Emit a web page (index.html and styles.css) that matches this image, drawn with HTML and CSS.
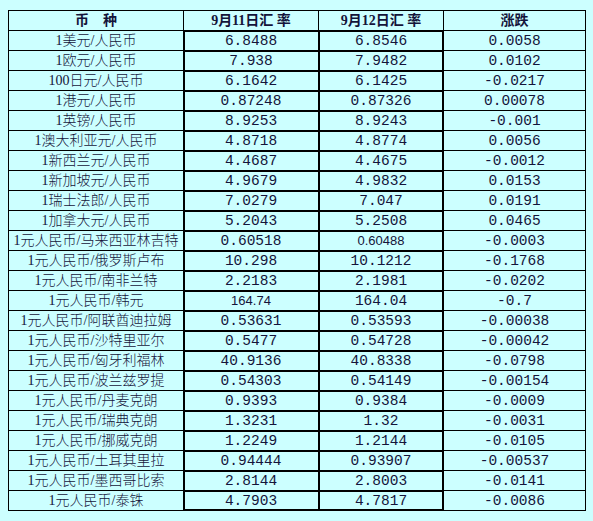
FILE: index.html
```html
<!DOCTYPE html>
<html lang="zh-CN">
<head>
<meta charset="utf-8">
<title>汇率</title>
<link rel="stylesheet" href="styles.css">
</head>
<body>
<div class="rates">
<div class="h">币　种</div><div class="h">9月11日汇 率</div><div class="h">9月12日汇 率</div><div class="h">涨跌</div>
<div class="name">1美元/人民币</div><div class="num a">6.8488</div><div class="num b">6.8546</div><div class="chg">0.0058</div>
<div class="name">1欧元/人民币</div><div class="num a">7.938</div><div class="num b">7.9482</div><div class="chg">0.0102</div>
<div class="name">100日元/人民币</div><div class="num a">6.1642</div><div class="num b">6.1425</div><div class="chg">-0.0217</div>
<div class="name">1港元/人民币</div><div class="num a">0.87248</div><div class="num b">0.87326</div><div class="chg">0.00078</div>
<div class="name">1英镑/人民币</div><div class="num a">8.9253</div><div class="num b">8.9243</div><div class="chg">-0.001</div>
<div class="name">1澳大利亚元/人民币</div><div class="num a">4.8718</div><div class="num b">4.8774</div><div class="chg">0.0056</div>
<div class="name">1新西兰元/人民币</div><div class="num a">4.4687</div><div class="num b">4.4675</div><div class="chg">-0.0012</div>
<div class="name">1新加坡元/人民币</div><div class="num a">4.9679</div><div class="num b">4.9832</div><div class="chg">0.0153</div>
<div class="name">1瑞士法郎/人民币</div><div class="num a">7.0279</div><div class="num b">7.047</div><div class="chg">0.0191</div>
<div class="name">1加拿大元/人民币</div><div class="num a">5.2043</div><div class="num b">5.2508</div><div class="chg">0.0465</div>
<div class="name">1元人民币/马来西亚林吉特</div><div class="num a">0.60518</div><div class="num b prop">0.60488</div><div class="chg">-0.0003</div>
<div class="name">1元人民币/俄罗斯卢布</div><div class="num a">10.298</div><div class="num b">10.1212</div><div class="chg">-0.1768</div>
<div class="name">1元人民币/南非兰特</div><div class="num a">2.2183</div><div class="num b">2.1981</div><div class="chg">-0.0202</div>
<div class="name">1元人民币/韩元</div><div class="num a prop">164.74</div><div class="num b">164.04</div><div class="chg">-0.7</div>
<div class="name">1元人民币/阿联酋迪拉姆</div><div class="num a">0.53631</div><div class="num b">0.53593</div><div class="chg">-0.00038</div>
<div class="name">1元人民币/沙特里亚尔</div><div class="num a">0.5477</div><div class="num b">0.54728</div><div class="chg">-0.00042</div>
<div class="name">1元人民币/匈牙利福林</div><div class="num a">40.9136</div><div class="num b">40.8338</div><div class="chg">-0.0798</div>
<div class="name">1元人民币/波兰兹罗提</div><div class="num a">0.54303</div><div class="num b">0.54149</div><div class="chg">-0.00154</div>
<div class="name">1元人民币/丹麦克朗</div><div class="num a">0.9393</div><div class="num b">0.9384</div><div class="chg">-0.0009</div>
<div class="name">1元人民币/瑞典克朗</div><div class="num a">1.3231</div><div class="num b">1.32</div><div class="chg">-0.0031</div>
<div class="name">1元人民币/挪威克朗</div><div class="num a">1.2249</div><div class="num b">1.2144</div><div class="chg">-0.0105</div>
<div class="name">1元人民币/土耳其里拉</div><div class="num a">0.94444</div><div class="num b">0.93907</div><div class="chg">-0.00537</div>
<div class="name">1元人民币/墨西哥比索</div><div class="num a">2.8144</div><div class="num b">2.8003</div><div class="chg">-0.0141</div>
<div class="name">1元人民币/泰铢</div><div class="num a last">4.7903</div><div class="num b last">4.7817</div><div class="chg">-0.0086</div>
</div>
</body>
</html>
```

FILE: styles.css
```css
html, body {
  background: #ccffff;
}
body {
  margin: 0;
  padding: 10px 8px 0 8px;
  color: #14143a;
}
.rates {
  display: grid;
  grid-template-columns: 174px 134px 124px 141px;
  grid-auto-rows: 19px;
  gap: 1px;
  padding: 1px;
  width: max-content;
  background: #000;
}
.rates > div {
  background: #ccffff;
  display: flex;
  align-items: center;
  justify-content: center;
  white-space: nowrap;
  overflow: hidden;
  line-height: 16px;
}
.h {
  font-family: "Liberation Serif", "Noto Sans CJK SC", serif;
  font-weight: bold;
  font-size: 14px;
}
.name {
  font-family: "Liberation Serif", "Noto Sans CJK SC", serif;
  font-size: 14px;
  font-weight: 300;
}
.num {
  font-family: "Liberation Mono", monospace;
  font-size: 14.5px;
}
.num.a {
  box-shadow: inset 1px 1px 0 #000;
}
.num.b {
  box-shadow: inset 1px 1px 0 #000, inset -1px 0 0 #000;
}
.num.a.last {
  box-shadow: inset 1px 1px 0 #000, inset 0 -1px 0 #000;
}
.num.b.last {
  box-shadow: inset 1px 1px 0 #000, inset -1px -1px 0 #000;
}
.num.prop {
  font-family: "Liberation Sans", sans-serif;
  font-size: 13px;
}
.chg {
  font-family: "Liberation Mono", monospace;
  font-size: 14.5px;
}
```
